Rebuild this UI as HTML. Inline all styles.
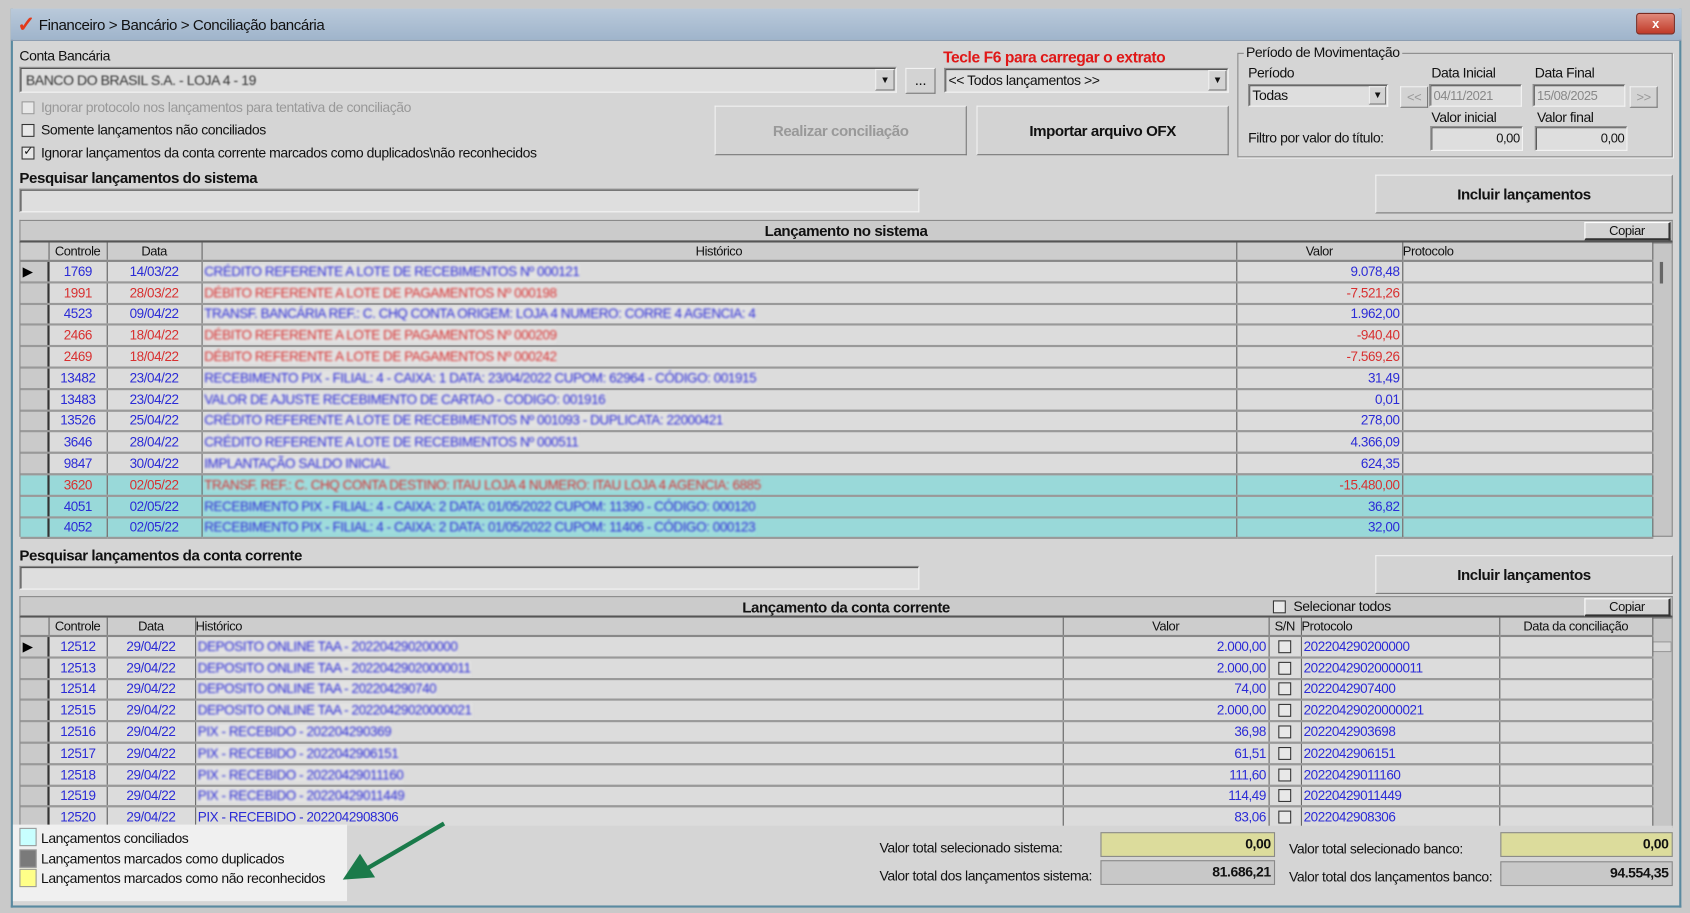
<!DOCTYPE html>
<html><head><meta charset="utf-8">
<style>
*{box-sizing:border-box;margin:0;padding:0}
html,body{width:1690px;height:913px;overflow:hidden;background:#c9c9c9}
#w{position:absolute;left:0;top:0;width:1568px;height:847px;transform:scale(1.07781,1.07792);transform-origin:0 0;font-family:"Liberation Sans",sans-serif;font-size:12px;color:#111;letter-spacing:-0.4px}
.a{position:absolute}
.win{left:10px;top:8px;width:1550px;height:834px;background:#d5d5d5;border:2px solid #5a8aa0;border-top:none}
.title{left:10px;top:8px;width:1550px;height:30px;background:linear-gradient(#b9c9da,#9fb4cb);border-bottom:1px solid #8a9bb0}
.inp{background:#dedede;border:1px solid #888;border-right-color:#f4f4f4;border-bottom-color:#f4f4f4;box-shadow:inset 1px 1px 0 #555}
.btn{background:#d3d3d3;border:1px solid #f2f2f2;border-right-color:#777;border-bottom-color:#777;text-align:center;font-weight:bold;font-size:14px}
.cb{width:12px;height:12px;border:1.5px solid #333;background:#e8e8e8}
.lbl{white-space:nowrap;font-size:13px}
table{border-collapse:collapse;table-layout:fixed;position:absolute}
td{height:19.8px;border-right:1px solid #666;border-bottom:2px solid #999;background:#dcdcdc;white-space:nowrap;overflow:hidden;padding:0 2px;font-size:12.5px}
th{height:17px;font-weight:normal;background:#cdcdcd;border-right:1px solid #666;border-bottom:2px solid #888;font-size:12px;white-space:nowrap}
td.i{background:#cacaca;border-right:2px solid #333}
td.c,td.d{text-align:center}
td.r{text-align:right}
.b td{color:#2b2bd6}.rd td{color:#d83030}
.cy td{background:#99d9d9}
td.h span{filter:blur(1px);display:inline-block;background:#e2e2e2}
.cy td.h span{background:#9fdcdc}
td.i{color:#000}
.hb{background:#cbcbcb;border:1px solid #888;border-bottom:2px solid #555;font-weight:bold;font-size:14px;text-align:center;line-height:19px}
.cp{background:#d3d3d3;border:1px solid #fff;border-right:2px solid #333;border-bottom:2px solid #333;text-align:center;font-size:12px;line-height:14px}
</style></head><body><div id="w">
<div class="a win"></div>
<div class="a title"></div>
<div class="a" style="left:16px;top:12px;color:#e23a1a;font-size:20px;font-weight:bold;line-height:22px">&#10003;</div>
<div class="a lbl" style="left:36px;top:15px;font-size:14px;color:#111">Financeiro &gt; Bancário &gt; Conciliação bancária</div>
<div class="a" style="left:1518px;top:12px;width:36px;height:20px;background:linear-gradient(#e0887a,#c03a28);border:1px solid #7a2a20;border-radius:3px;color:#fff;text-align:center;font-weight:bold;line-height:18px">x</div>

<div class="a lbl" style="left:18px;top:44px">Conta Bancária</div>
<div class="a inp" style="left:18px;top:62px;width:814px;height:24px"></div>
<div class="a lbl" style="left:24px;top:67px;filter:blur(0.8px);color:#333">BANCO DO BRASIL S.A. - LOJA 4 - 19</div>
<div class="a btn" style="left:812px;top:64px;width:18px;height:20px;font-size:9px;line-height:18px">▼</div>
<div class="a btn" style="left:840px;top:63px;width:28px;height:24px;font-weight:normal;line-height:20px">...</div>
<div class="a lbl" style="left:875px;top:46px;color:#e01818;font-weight:bold;font-size:14.5px">Tecle F6 para carregar o extrato</div>
<div class="a inp" style="left:876px;top:63px;width:264px;height:23px"></div>
<div class="a lbl" style="left:880px;top:67px">&lt;&lt; Todos lançamentos &gt;&gt;</div>
<div class="a btn" style="left:1121px;top:65px;width:17px;height:19px;font-size:9px;line-height:17px">▼</div>

<div class="a cb" style="left:20px;top:94px;border-color:#999"></div>
<div class="a lbl" style="left:38px;top:92px;color:#999">Ignorar protocolo nos lançamentos para tentativa de conciliação</div>
<div class="a cb" style="left:20px;top:115px"></div>
<div class="a lbl" style="left:38px;top:113px">Somente lançamentos não conciliados</div>
<div class="a cb" style="left:20px;top:136px;font-size:11px;line-height:9px;text-align:center">✓</div>
<div class="a lbl" style="left:38px;top:134px">Ignorar lançamentos da conta corrente marcados como duplicados\não reconhecidos</div>

<div class="a btn" style="left:663px;top:98px;width:234px;height:46px;line-height:44px;color:#999">Realizar conciliação</div>
<div class="a btn" style="left:906px;top:98px;width:234px;height:46px;line-height:44px">Importar arquivo OFX</div>

<div class="a" style="left:1148px;top:49px;width:404px;height:97px;border:1px solid #888;box-shadow:1px 1px 0 #f4f4f4"></div>
<div class="a lbl" style="left:1154px;top:41px;background:#d5d5d5;padding:0 2px">Período de Movimentação</div>
<div class="a lbl" style="left:1158px;top:60px">Período</div>
<div class="a inp" style="left:1158px;top:78px;width:130px;height:21px"></div>
<div class="a lbl" style="left:1162px;top:81px">Todas</div>
<div class="a btn" style="left:1270px;top:80px;width:16px;height:17px;font-size:9px;line-height:15px">▼</div>
<div class="a btn" style="left:1299px;top:80px;width:26px;height:20px;font-weight:normal;font-size:12px;color:#999;line-height:18px">&lt;&lt;</div>
<div class="a lbl" style="left:1328px;top:60px">Data Inicial</div>
<div class="a inp" style="left:1326px;top:78px;width:86px;height:21px;color:#888;padding:3px 3px">04/11/2021</div>
<div class="a lbl" style="left:1424px;top:60px">Data Final</div>
<div class="a inp" style="left:1422px;top:78px;width:86px;height:21px;color:#888;padding:3px 3px">15/08/2025</div>
<div class="a btn" style="left:1512px;top:80px;width:26px;height:20px;font-weight:normal;font-size:12px;color:#999;line-height:18px">&gt;&gt;</div>
<div class="a lbl" style="left:1328px;top:101px">Valor inicial</div>
<div class="a lbl" style="left:1426px;top:101px">Valor final</div>
<div class="a lbl" style="left:1158px;top:120px">Filtro por valor do título:</div>
<div class="a inp" style="left:1327px;top:117px;width:86px;height:23px;text-align:right;padding:3px 2px">0,00</div>
<div class="a inp" style="left:1424px;top:117px;width:86px;height:23px;text-align:right;padding:3px 2px">0,00</div>

<div class="a lbl" style="left:18px;top:157px;font-weight:bold;font-size:14px">Pesquisar lançamentos do sistema</div>
<div class="a inp" style="left:18px;top:175px;width:835px;height:22px"></div>
<div class="a btn" style="left:1276px;top:162px;width:276px;height:36px;line-height:34px">Incluir lançamentos</div>

<div class="a hb" style="left:18px;top:204px;width:1534px;height:21px">Lançamento no sistema</div>
<div class="a cp" style="left:1470px;top:206px;width:80px;height:17px">Copiar</div>
<div class="a" style="left:18px;top:225px;width:1534px;height:273px;background:#c6c6c6;border:1px solid #888"></div>
<div class="a" style="left:1540px;top:243px;width:3px;height:20px;background:#666"></div>
<table style="left:19px;top:225px;width:1514px">
<colgroup><col style="width:26px"><col style="width:54px"><col style="width:88px"><col style="width:960px"><col style="width:154px"><col style="width:232px"></colgroup>
<tr><th></th><th>Controle</th><th>Data</th><th>Histórico</th><th>Valor</th><th style="text-align:left">Protocolo</th></tr>
<tr class="b"><td class="i">▶</td><td class="c">1769</td><td class="d">14/03/22</td><td class="h"><span>CRÉDITO REFERENTE A LOTE DE RECEBIMENTOS Nº 000121</span></td><td class="r">9.078,48</td><td></td></tr>
<tr class="rd"><td class="i"></td><td class="c">1991</td><td class="d">28/03/22</td><td class="h"><span>DÉBITO REFERENTE A LOTE DE PAGAMENTOS Nº 000198</span></td><td class="r">-7.521,26</td><td></td></tr>
<tr class="b"><td class="i"></td><td class="c">4523</td><td class="d">09/04/22</td><td class="h"><span>TRANSF. BANCÁRIA REF.: C. CHQ CONTA ORIGEM: LOJA 4 NUMERO: CORRE 4 AGENCIA: 4</span></td><td class="r">1.962,00</td><td></td></tr>
<tr class="rd"><td class="i"></td><td class="c">2466</td><td class="d">18/04/22</td><td class="h"><span>DÉBITO REFERENTE A LOTE DE PAGAMENTOS Nº 000209</span></td><td class="r">-940,40</td><td></td></tr>
<tr class="rd"><td class="i"></td><td class="c">2469</td><td class="d">18/04/22</td><td class="h"><span>DÉBITO REFERENTE A LOTE DE PAGAMENTOS Nº 000242</span></td><td class="r">-7.569,26</td><td></td></tr>
<tr class="b"><td class="i"></td><td class="c">13482</td><td class="d">23/04/22</td><td class="h"><span>RECEBIMENTO PIX - FILIAL: 4 - CAIXA: 1 DATA: 23/04/2022 CUPOM: 62964 - CÓDIGO: 001915</span></td><td class="r">31,49</td><td></td></tr>
<tr class="b"><td class="i"></td><td class="c">13483</td><td class="d">23/04/22</td><td class="h"><span>VALOR DE AJUSTE RECEBIMENTO DE CARTAO - CODIGO: 001916</span></td><td class="r">0,01</td><td></td></tr>
<tr class="b"><td class="i"></td><td class="c">13526</td><td class="d">25/04/22</td><td class="h"><span>CRÉDITO REFERENTE A LOTE DE RECEBIMENTOS Nº 001093 - DUPLICATA: 22000421</span></td><td class="r">278,00</td><td></td></tr>
<tr class="b"><td class="i"></td><td class="c">3646</td><td class="d">28/04/22</td><td class="h"><span>CRÉDITO REFERENTE A LOTE DE RECEBIMENTOS Nº 000511</span></td><td class="r">4.366,09</td><td></td></tr>
<tr class="b"><td class="i"></td><td class="c">9847</td><td class="d">30/04/22</td><td class="h"><span>IMPLANTAÇÃO SALDO INICIAL</span></td><td class="r">624,35</td><td></td></tr>
<tr class="rd cy"><td class="i"></td><td class="c">3620</td><td class="d">02/05/22</td><td class="h"><span>TRANSF. REF.: C. CHQ CONTA DESTINO: ITAU LOJA 4 NUMERO: ITAU LOJA 4 AGENCIA: 6885</span></td><td class="r">-15.480,00</td><td></td></tr>
<tr class="b cy"><td class="i"></td><td class="c">4051</td><td class="d">02/05/22</td><td class="h"><span>RECEBIMENTO PIX - FILIAL: 4 - CAIXA: 2 DATA: 01/05/2022 CUPOM: 11390 - CÓDIGO: 000120</span></td><td class="r">36,82</td><td></td></tr>
<tr class="b cy"><td class="i"></td><td class="c">4052</td><td class="d">02/05/22</td><td class="h"><span>RECEBIMENTO PIX - FILIAL: 4 - CAIXA: 2 DATA: 01/05/2022 CUPOM: 11406 - CÓDIGO: 000123</span></td><td class="r">32,00</td><td></td></tr>
</table>

<div class="a lbl" style="left:18px;top:507px;font-weight:bold;font-size:14px">Pesquisar lançamentos da conta corrente</div>
<div class="a inp" style="left:18px;top:525px;width:835px;height:22px"></div>
<div class="a btn" style="left:1276px;top:515px;width:276px;height:36px;line-height:34px">Incluir lançamentos</div>

<div class="a hb" style="left:18px;top:553px;width:1534px;height:20px">Lançamento da conta corrente</div>
<div class="a cb" style="left:1181px;top:557px"></div>
<div class="a lbl" style="left:1200px;top:555px">Selecionar todos</div>
<div class="a cp" style="left:1470px;top:555px;width:80px;height:17px">Copiar</div>
<div class="a" style="left:18px;top:573px;width:1534px;height:195px;background:#c6c6c6;border:1px solid #888"></div>
<div class="a" style="left:1533px;top:595px;width:18px;height:10px;border:1px solid #999;background:#d8d8d8"></div>
<table style="left:19px;top:573px;width:1514px">
<colgroup><col style="width:26px"><col style="width:54px"><col style="width:82px"><col style="width:805px"><col style="width:191px"><col style="width:30px"><col style="width:184px"><col style="width:142px"></colgroup>
<tr><th></th><th>Controle</th><th>Data</th><th style="text-align:left">Histórico</th><th>Valor</th><th>S/N</th><th style="text-align:left">Protocolo</th><th>Data da conciliação</th></tr>
<tr class="b"><td class="i">▶</td><td class="c">12512</td><td class="d">29/04/22</td><td class="h"><span>DEPOSITO ONLINE TAA - 202204290200000</span></td><td class="r">2.000,00</td><td class="c"><div class="cb" style="margin:auto"></div></td><td>202204290200000</td><td></td></tr>
<tr class="b"><td class="i"></td><td class="c">12513</td><td class="d">29/04/22</td><td class="h"><span>DEPOSITO ONLINE TAA - 20220429020000011</span></td><td class="r">2.000,00</td><td class="c"><div class="cb" style="margin:auto"></div></td><td>20220429020000011</td><td></td></tr>
<tr class="b"><td class="i"></td><td class="c">12514</td><td class="d">29/04/22</td><td class="h"><span>DEPOSITO ONLINE TAA - 202204290740</span></td><td class="r">74,00</td><td class="c"><div class="cb" style="margin:auto"></div></td><td>2022042907400</td><td></td></tr>
<tr class="b"><td class="i"></td><td class="c">12515</td><td class="d">29/04/22</td><td class="h"><span>DEPOSITO ONLINE TAA - 20220429020000021</span></td><td class="r">2.000,00</td><td class="c"><div class="cb" style="margin:auto"></div></td><td>20220429020000021</td><td></td></tr>
<tr class="b"><td class="i"></td><td class="c">12516</td><td class="d">29/04/22</td><td class="h"><span>PIX - RECEBIDO - 202204290369</span></td><td class="r">36,98</td><td class="c"><div class="cb" style="margin:auto"></div></td><td>2022042903698</td><td></td></tr>
<tr class="b"><td class="i"></td><td class="c">12517</td><td class="d">29/04/22</td><td class="h"><span>PIX - RECEBIDO - 2022042906151</span></td><td class="r">61,51</td><td class="c"><div class="cb" style="margin:auto"></div></td><td>2022042906151</td><td></td></tr>
<tr class="b"><td class="i"></td><td class="c">12518</td><td class="d">29/04/22</td><td class="h"><span>PIX - RECEBIDO - 20220429011160</span></td><td class="r">111,60</td><td class="c"><div class="cb" style="margin:auto"></div></td><td>20220429011160</td><td></td></tr>
<tr class="b"><td class="i"></td><td class="c">12519</td><td class="d">29/04/22</td><td class="h"><span>PIX - RECEBIDO - 20220429011449</span></td><td class="r">114,49</td><td class="c"><div class="cb" style="margin:auto"></div></td><td>20220429011449</td><td></td></tr>
<tr class="b"><td class="i"></td><td class="c">12520</td><td class="d">29/04/22</td><td>PIX - RECEBIDO - 2022042908306</td><td class="r">83,06</td><td class="c"><div class="cb" style="margin:auto"></div></td><td>2022042908306</td><td></td></tr>
</table>
<div class="a" style="left:18px;top:766px;width:1534px;height:70px;background:#d5d5d5"></div>

<div class="a" style="left:12px;top:765px;width:310px;height:71px;background:#f0f0f0"></div>
<div class="a" style="left:18px;top:768px;width:16px;height:17px;background:#c8ffff;border:1px solid #999"></div>
<div class="a lbl" style="left:38px;top:770px">Lançamentos conciliados</div>
<div class="a" style="left:18px;top:788px;width:16px;height:17px;background:#7a7a7a;border:1px solid #999"></div>
<div class="a lbl" style="left:38px;top:789px">Lançamentos marcados como duplicados</div>
<div class="a" style="left:18px;top:806px;width:16px;height:17px;background:#ffff88;border:1px solid #999"></div>
<div class="a lbl" style="left:38px;top:807px">Lançamentos marcados como não reconhecidos</div>
<svg class="a" style="left:310px;top:758px" width="110" height="65" viewBox="0 0 110 65"><line x1="102" y1="6" x2="30" y2="48" stroke="#1a7a4a" stroke-width="4"/><polygon points="8,58 24,34 38,56" fill="#1a7a4a"/></svg>

<div class="a lbl" style="left:816px;top:779px">Valor total selecionado sistema:</div>
<div class="a" style="left:1021px;top:772px;width:162px;height:23px;background:#dcdc9c;border:1px solid #888;text-align:right;font-weight:bold;font-size:13px;padding:2px 3px">0,00</div>
<div class="a lbl" style="left:816px;top:805px">Valor total dos lançamentos sistema:</div>
<div class="a" style="left:1021px;top:798px;width:162px;height:23px;background:#c8c8c8;border:1px solid #888;text-align:right;font-weight:bold;font-size:13px;padding:2px 3px">81.686,21</div>
<div class="a lbl" style="left:1196px;top:780px">Valor total selecionado banco:</div>
<div class="a" style="left:1392px;top:772px;width:160px;height:23px;background:#dcdc9c;border:1px solid #888;text-align:right;font-weight:bold;font-size:13px;padding:2px 3px">0,00</div>
<div class="a lbl" style="left:1196px;top:806px">Valor total dos lançamentos banco:</div>
<div class="a" style="left:1392px;top:799px;width:160px;height:23px;background:#c8c8c8;border:1px solid #888;text-align:right;font-weight:bold;font-size:13px;padding:2px 3px">94.554,35</div>
</div></body></html>
